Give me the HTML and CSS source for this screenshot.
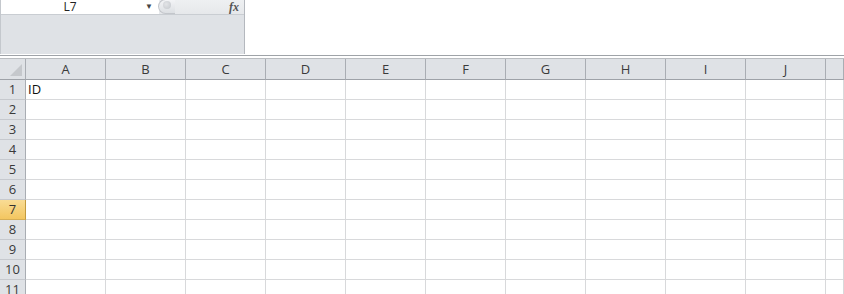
FILE: index.html
```html
<!DOCTYPE html>
<html lang="en">
<head>
  <meta charset="UTF-8"/>
  <title>Sheet1</title>
  <link rel="stylesheet" href="styles.css">
</head>
<body>

  <div class="topbar">
    <div class="name-panel">
      <div class="name-row">
        <div class="name-box">L7</div>
        <span class="drop">&#9660;</span>
        <div class="splitter"><span class="dot"></span></div>
        <span class="fx">fx</span>
      </div>
      <div class="ribbon-fill"></div>
    </div>
    <div class="formula-input"></div>
  </div>

  <div class="divider"></div>

  <div class="sheet">
    <div class="corner"></div>
    <div class="col-head">A</div>
    <div class="col-head">B</div>
    <div class="col-head">C</div>
    <div class="col-head">D</div>
    <div class="col-head">E</div>
    <div class="col-head">F</div>
    <div class="col-head">G</div>
    <div class="col-head">H</div>
    <div class="col-head">I</div>
    <div class="col-head">J</div>
    <div class="col-head"></div>
  </div>

  <script>
    // build rows 1..11
    const sheet = document.querySelector('.sheet');
    for (let r = 1; r <= 11; r++) {
      const head = document.createElement('div');
      head.className = 'row-head' + (r === 7 ? ' active' : '');
      head.textContent = r;
      sheet.appendChild(head);
      for (let c = 0; c < 11; c++) {
        const cell = document.createElement('div');
        cell.className = 'cell';
        if (r === 1 && c === 0) cell.textContent = 'ID';
        sheet.appendChild(cell);
      }
    }
  </script>

</body>
</html>
```

FILE: styles.css
```css
* {
  box-sizing: border-box;
  margin: 0;
  padding: 0;
}

body {
  font-family: 'Open Sans', 'Liberation Sans', sans-serif;
  font-size: 13px;
  background: #fff;
  color: #222;
  width: 844px;
  height: 294px;
  overflow: hidden;
}

/* Name box + formula bar */
.topbar {
  display: flex;
  height: 54px;
}

.name-panel {
  width: 245px;
  display: flex;
  flex-direction: column;
  border-left: 1px solid #c4c8cd;
  border-right: 1px solid #b4b8be;
  background: #dfe2e6;
}

.name-row {
  height: 15px;
  display: flex;
  align-items: center;
  background: linear-gradient(#eef0f2, #e6e8eb);
  border-bottom: 1px solid #c9cdd2;
}

.name-box {
  width: 158px;
  height: 100%;
  background: #fff;
  font-size: 12px;
  line-height: 14px;
  text-align: center;
  color: #222;
  padding-right: 20px;
  position: relative;
}

.drop {
  position: absolute;
  left: 145px;
  top: 1px;
  font-size: 8px;
  line-height: 10px;
  color: #444;
}

.splitter {
  width: 17px;
  height: 15px;
  margin-left: -1px;
  margin-top: -1px;
  border: 1px solid #c3c6cb;
  border-right: none;
  border-radius: 9px 0 0 9px;
  background: linear-gradient(#f3f4f6, #dcdfe3);
  position: relative;
}

.dot {
  position: absolute;
  left: 4px;
  top: 1px;
  width: 8px;
  height: 8px;
  border-radius: 50%;
  background: radial-gradient(circle at 40% 40%, #e2e4e7, #c4c7cc);
}

.fx {
  margin-left: auto;
  margin-right: 5px;
  font-family: 'Liberation Serif', serif;
  font-style: italic;
  font-weight: bold;
  font-size: 12px;
  color: #555;
  line-height: 12px;
}

.ribbon-fill {
  flex: 1;
}

.formula-input {
  flex: 1;
  background: #fff;
}

.divider {
  height: 4px;
  margin-top: 1px;
  border-top: 1px solid #9fa3a8;
  border-bottom: 1px solid #b9bcc0;
  background: #fff;
}

/* Grid */
.sheet {
  display: grid;
  grid-template-columns: 26px repeat(10, 80px) 1fr;
  grid-template-rows: 21px;
  grid-auto-rows: 20px;
}

.corner {
  background: #dfe2e6;
  border-right: 1px solid #a9adb3;
  border-bottom: 1px solid #9ea2a8;
  position: relative;
}

.corner::after {
  content: "";
  position: absolute;
  right: 3px;
  bottom: 3px;
  border-left: 12px solid transparent;
  border-bottom: 12px solid #c5c8cc;
}

.col-head {
  background: #dfe2e6;
  border-right: 1px solid #a9adb3;
  border-bottom: 1px solid #9ea2a8;
  color: #3a3a3a;
  text-align: center;
  line-height: 20px;
}

.row-head {
  background: #dfe2e6;
  border-right: 1px solid #a9adb3;
  border-bottom: 1px solid #c6c9ce;
  color: #3a3a3a;
  text-align: center;
  line-height: 19px;
}

.row-head.active {
  background: linear-gradient(#f9dc95, #f3c660);
  border-right-color: #c29a3e;
  border-bottom-color: #d6ae55;
  color: #333;
}

.cell {
  border-right: 1px solid #d8d9db;
  border-bottom: 1px solid #d8d9db;
  padding-left: 2px;
  line-height: 19px;
  color: #111;
}
```
